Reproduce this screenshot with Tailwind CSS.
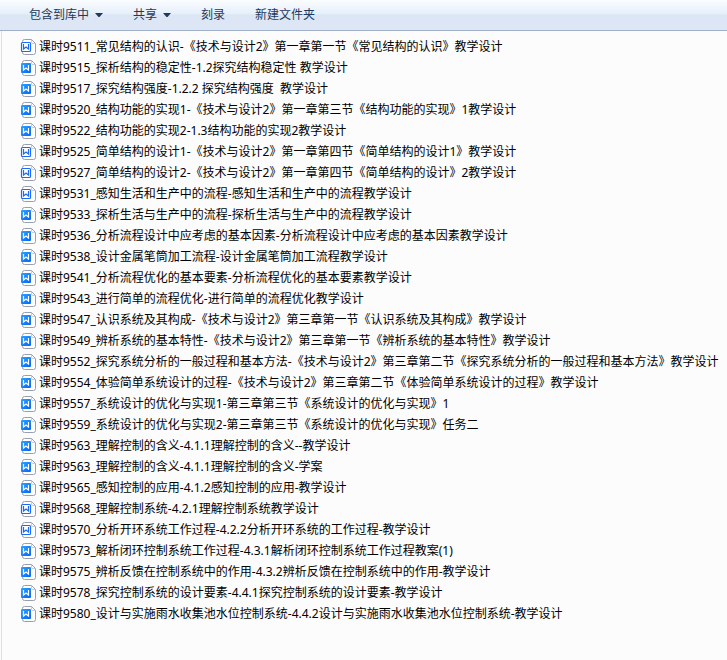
<!DOCTYPE html>
<html lang="zh-CN">
<head>
  <meta charset="UTF-8">
  <meta name="viewport" content="width=device-width, initial-scale=1.0">
  <title>教学设计</title>
  <script src="https://cdn.jsdelivr.net/npm/@tailwindcss/browser@4"></script>
</head>
<body class="min-h-screen flex flex-col bg-[#fcfcfc] text-black text-[12px] font-['Noto_Sans','Noto_Sans_CJK_SC',sans-serif] [text-spacing-trim:space-all]">

  <!-- Icon sprites -->
  <svg class="absolute w-0 h-0">
    <linearGradient id="blue" x1="0" y1="0" x2="1" y2="1">
      <stop offset="0" stop-color="#2fa4ff"/>
      <stop offset="1" stop-color="#0563f5"/>
    </linearGradient>
    <symbol id="doc" viewBox="0 0 16 16">
      <path d="M2.5 3V2.500q0-2 2-2H11.500L15.500 4.500V13.500q0 2-2 2H4.500q-2 0-2-2V13" fill="#fff" stroke="#9a9fb0"/>
      <path d="M11.500 1V3q0 1.500 1.500 1.500H15" fill="none" stroke="#c9ccd6"/>
      <rect x="1" y="3" width="10" height="10" rx="1" fill="url(#blue)"/>
      <path d="M3.500 5V10L6 8L8.500 10V5" fill="none" stroke="#fff" stroke-width="1.200"/>
    </symbol>
    <symbol id="docx" viewBox="0 0 16 16">
      <path d="M2.500 3V2.500q0-2 2-2H11.500L15.500 4.500V13.500q0 2-2 2H4.500q-2 0-2-2V13" fill="#fff" stroke="#9a9fb0"/>
      <path d="M11.500 1V3q0 1.500 1.500 1.500H15" fill="none" stroke="#c9ccd6"/>
      <rect x="1.500" y="3.500" width="9" height="9" rx="1" fill="#fff" stroke="#1a6bf5" stroke-width="1.200"/>
      <path d="M3.500 5V10L6 8L8.500 10V5" fill="none" stroke="#1a6bf5" stroke-width="1.200"/>
    </symbol>
  </svg>

  <!-- Toolbar -->
  <header class="flex items-center h-[31px] pl-[29px] gap-[30px] border-b border-[#9fb0c8] bg-linear-to-b from-[#fafdff] from-0% via-[#e6effa] via-45% to-[#dce6f4] to-50% text-[#1e395b]">
    <button type="button" class="flex items-center gap-[6px]">包含到库中
      <svg class="w-2 h-1" viewBox="0 0 8 4"><path d="M0 0h8L4.500 4h-1z" fill="#1e395b"/></svg>
    </button>
    <button type="button" class="flex items-center gap-[6px]">共享
      <svg class="w-2 h-1" viewBox="0 0 8 4"><path d="M0 0h8L4.500 4h-1z" fill="#1e395b"/></svg>
    </button>
    <button type="button">刻录</button>
    <button type="button">新建文件夹</button>
  </header>

  <!-- File list -->
  <main class="grow ml-px border-l border-[#d3e2f2] pt-[5px] pl-[18px]">
    <ul id="files"></ul>
  </main>

  <script>
    // [icon, file name]
    const files = [
      ['docx', '课时9511_常见结构的认识-《技术与设计2》第一章第一节《常见结构的认识》教学设计'],
      ['doc', '课时9515_探析结构的稳定性-1.2探究结构稳定性 教学设计'],
      ['doc', '课时9517_探究结构强度-1.2.2 探究结构强度  教学设计'],
      ['doc', '课时9520_结构功能的实现1-《技术与设计2》第一章第三节《结构功能的实现》1教学设计'],
      ['doc', '课时9522_结构功能的实现2-1.3结构功能的实现2教学设计'],
      ['docx', '课时9525_简单结构的设计1-《技术与设计2》第一章第四节《简单结构的设计1》教学设计'],
      ['docx', '课时9527_简单结构的设计2-《技术与设计2》第一章第四节《简单结构的设计》2教学设计'],
      ['docx', '课时9531_感知生活和生产中的流程-感知生活和生产中的流程教学设计'],
      ['doc', '课时9533_探析生活与生产中的流程-探析生活与生产中的流程教学设计'],
      ['doc', '课时9536_分析流程设计中应考虑的基本因素-分析流程设计中应考虑的基本因素教学设计'],
      ['doc', '课时9538_设计金属笔筒加工流程-设计金属笔筒加工流程教学设计'],
      ['doc', '课时9541_分析流程优化的基本要素-分析流程优化的基本要素教学设计'],
      ['doc', '课时9543_进行简单的流程优化-进行简单的流程优化教学设计'],
      ['doc', '课时9547_认识系统及其构成-《技术与设计2》第三章第一节《认识系统及其构成》教学设计'],
      ['doc', '课时9549_辨析系统的基本特性-《技术与设计2》第三章第一节《辨析系统的基本特性》教学设计'],
      ['doc', '课时9552_探究系统分析的一般过程和基本方法-《技术与设计2》第三章第二节《探究系统分析的一般过程和基本方法》教学设计'],
      ['doc', '课时9554_体验简单系统设计的过程-《技术与设计2》第三章第二节《体验简单系统设计的过程》教学设计'],
      ['doc', '课时9557_系统设计的优化与实现1-第三章第三节《系统设计的优化与实现》1'],
      ['doc', '课时9559_系统设计的优化与实现2-第三章第三节《系统设计的优化与实现》任务二'],
      ['doc', '课时9563_理解控制的含义-4.1.1理解控制的含义--教学设计'],
      ['doc', '课时9563_理解控制的含义-4.1.1理解控制的含义-学案'],
      ['doc', '课时9565_感知控制的应用-4.1.2感知控制的应用-教学设计'],
      ['docx', '课时9568_理解控制系统-4.2.1理解控制系统教学设计'],
      ['docx', '课时9570_分析开环系统工作过程-4.2.2分析开环系统的工作过程-教学设计'],
      ['doc', '课时9573_解析闭环控制系统工作过程-4.3.1解析闭环控制系统工作过程教案(1)'],
      ['doc', '课时9575_辨析反馈在控制系统中的作用-4.3.2辨析反馈在控制系统中的作用-教学设计'],
      ['doc', '课时9578_探究控制系统的设计要素-4.4.1探究控制系统的设计要素-教学设计'],
      ['doc', '课时9580_设计与实施雨水收集池水位控制系统-4.4.2设计与实施雨水收集池水位控制系统-教学设计'],
    ];

    document.getElementById('files').innerHTML = files.map(([icon, name]) => `
      <li class="flex items-center h-[21px] gap-[3px] whitespace-pre"><svg class="w-4 h-4 shrink-0"><use href="#${icon}"/></svg><span>${name}</span></li>`).join('');
  </script>
</body>
</html>
